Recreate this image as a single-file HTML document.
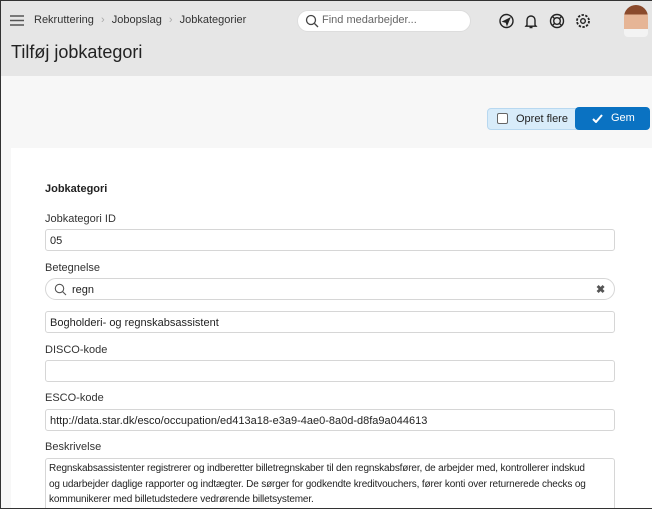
<!DOCTYPE html>
<html><head><meta charset="utf-8"><style>
*{box-sizing:border-box;margin:0;padding:0}
html,body{width:652px;height:509px;overflow:hidden}
body{font-family:"Liberation Sans",sans-serif;color:#222;background:#f7f7f7;position:relative;font-size:11px}
.frame{position:absolute;left:0;top:0;width:652px;height:509px;border:1px solid #333;border-right:none;pointer-events:none;z-index:9}
.hdr{position:absolute;left:0;top:0;width:652px;height:76px;background:#e6e6e6}
.abs{position:absolute}
.crumb{top:14px;left:34px;font-size:11px;color:#333}
.search{left:297px;top:10px;width:174px;height:22px;background:#fff;border-radius:11px;border:1px solid #ddd}
h1{position:absolute;left:11px;top:42px;font-size:18px;font-weight:normal;color:#222}
.card{position:absolute;left:11px;top:148px;width:641px;height:361px;background:#fff}
.lbl{position:absolute;left:45px;font-size:11px;color:#333}
.inp{position:absolute;left:45px;width:570px;height:22px;border:1px solid #d6d6d6;border-radius:3px;background:#fff;font-size:11px;padding:5px 4px;color:#222}
</style></head><body>
<div class="hdr"></div>
<svg class="abs" style="left:10px;top:15px" width="14" height="11"><path d="M0 1h14M0 5.5h14M0 10h14" stroke="#555" stroke-width="1.5"/></svg>
<div class="abs crumb">Rekruttering <span style="color:#aaa;margin:0 4px">›</span> Jobopslag <span style="color:#aaa;margin:0 4px">›</span> Jobkategorier</div>
<div class="abs search"></div>
<svg class="abs" style="left:305px;top:14px" width="14" height="14"><circle cx="6" cy="6" r="4.5" stroke="#444" stroke-width="1.3" fill="none"/><path d="M9.5 9.5l3.5 3.5" stroke="#444" stroke-width="1.3"/></svg>
<div class="abs" style="left:322px;top:14px;color:#666">Find medarbejder...</div>
<svg class="abs" style="left:499px;top:12px" width="100" height="18" fill="none" stroke="#222" stroke-width="1.4">
<circle cx="7.5" cy="9" r="6.5"/><path d="M4.5 9.5l6-3-2.5 6-0.8-2.3z" fill="#222"/>
<path d="M28 13V8a4 4 0 018 0v5l1 1.2H27zM30.5 15.5h3"/>
<circle cx="58" cy="9" r="6.5"/><circle cx="58" cy="9" r="3.3"/><path d="M53.5 4.5l2.2 2.2M62.5 4.5l-2.2 2.2M53.5 13.5l2.2-2.2M62.5 13.5l-2.2-2.2"/>
<circle cx="84" cy="9" r="2.3"/><circle cx="84" cy="9" r="6" stroke-dasharray="2.4 1.4" stroke-width="1.8"/>
</svg>
<div class="abs" style="left:624px;top:5px;width:24px;height:32px;border-radius:12px 12px 4px 4px;background:linear-gradient(#8a4a2c 0 30%,#e6b596 30% 75%,#f3f3f3 75%)"></div>
<h1>Tilføj jobkategori</h1>
<div class="abs" style="left:487px;top:108px;width:92px;height:22px;background:#d8ecfa;border:1px solid #b8d8f0;border-radius:4px 0 0 4px"></div>
<div class="abs" style="left:497px;top:113px;width:11px;height:11px;border:1px solid #666;border-radius:2px;background:#fff"></div>
<div class="abs" style="left:516px;top:113px;color:#222">Opret flere</div>
<div class="abs" style="left:575px;top:107px;width:75px;height:23px;background:#0a72c2;border-radius:4px;color:#fff;padding:5px 0 0 36px">Gem</div>
<svg class="abs" style="left:592px;top:114px" width="11" height="9"><path d="M1 5l3 3 6-7" stroke="#fff" stroke-width="2" fill="none"/></svg>
<div class="card"></div>
<div class="lbl" style="top:183px;font-weight:bold;color:#222">Jobkategori</div>
<div class="lbl" style="top:213px">Jobkategori ID</div>
<div class="inp" style="top:229px">05</div>
<div class="lbl" style="top:262px">Betegnelse</div>
<div class="inp" style="top:278px;border-radius:11px;padding-left:26px">regn</div>
<svg class="abs" style="left:54px;top:283px" width="13" height="13"><circle cx="5.5" cy="5.5" r="4.2" stroke="#555" stroke-width="1.1" fill="none"/><path d="M8.5 8.5l3.5 3.5" stroke="#555" stroke-width="1.1"/></svg>
<div class="abs" style="left:596px;top:283px;font-weight:bold;color:#555">✖</div>
<div class="inp" style="top:311px">Bogholderi- og regnskabsassistent</div>
<div class="lbl" style="top:344px">DISCO-kode</div>
<div class="inp" style="top:360px"></div>
<div class="lbl" style="top:392px">ESCO-kode</div>
<div class="inp" style="top:409px">http://data.star.dk/esco/occupation/ed413a18-e3a9-4ae0-8a0d-d8fa9a044613</div>
<div class="lbl" style="top:441px">Beskrivelse</div>
<div class="inp" style="top:458px;height:60px;line-height:15.5px;padding:2px 3px;font-size:10px;letter-spacing:-0.15px;white-space:nowrap;overflow:hidden">Regnskabsassistenter registrerer og indberetter billetregnskaber til den regnskabsfører, de arbejder med, kontrollerer indskud<br>og udarbejder daglige rapporter og indtægter. De sørger for godkendte kreditvouchers, fører konti over returnerede checks og<br>kommunikerer med billetudstedere vedrørende billetsystemer.</div>
<div class="frame"></div>
</body></html>
